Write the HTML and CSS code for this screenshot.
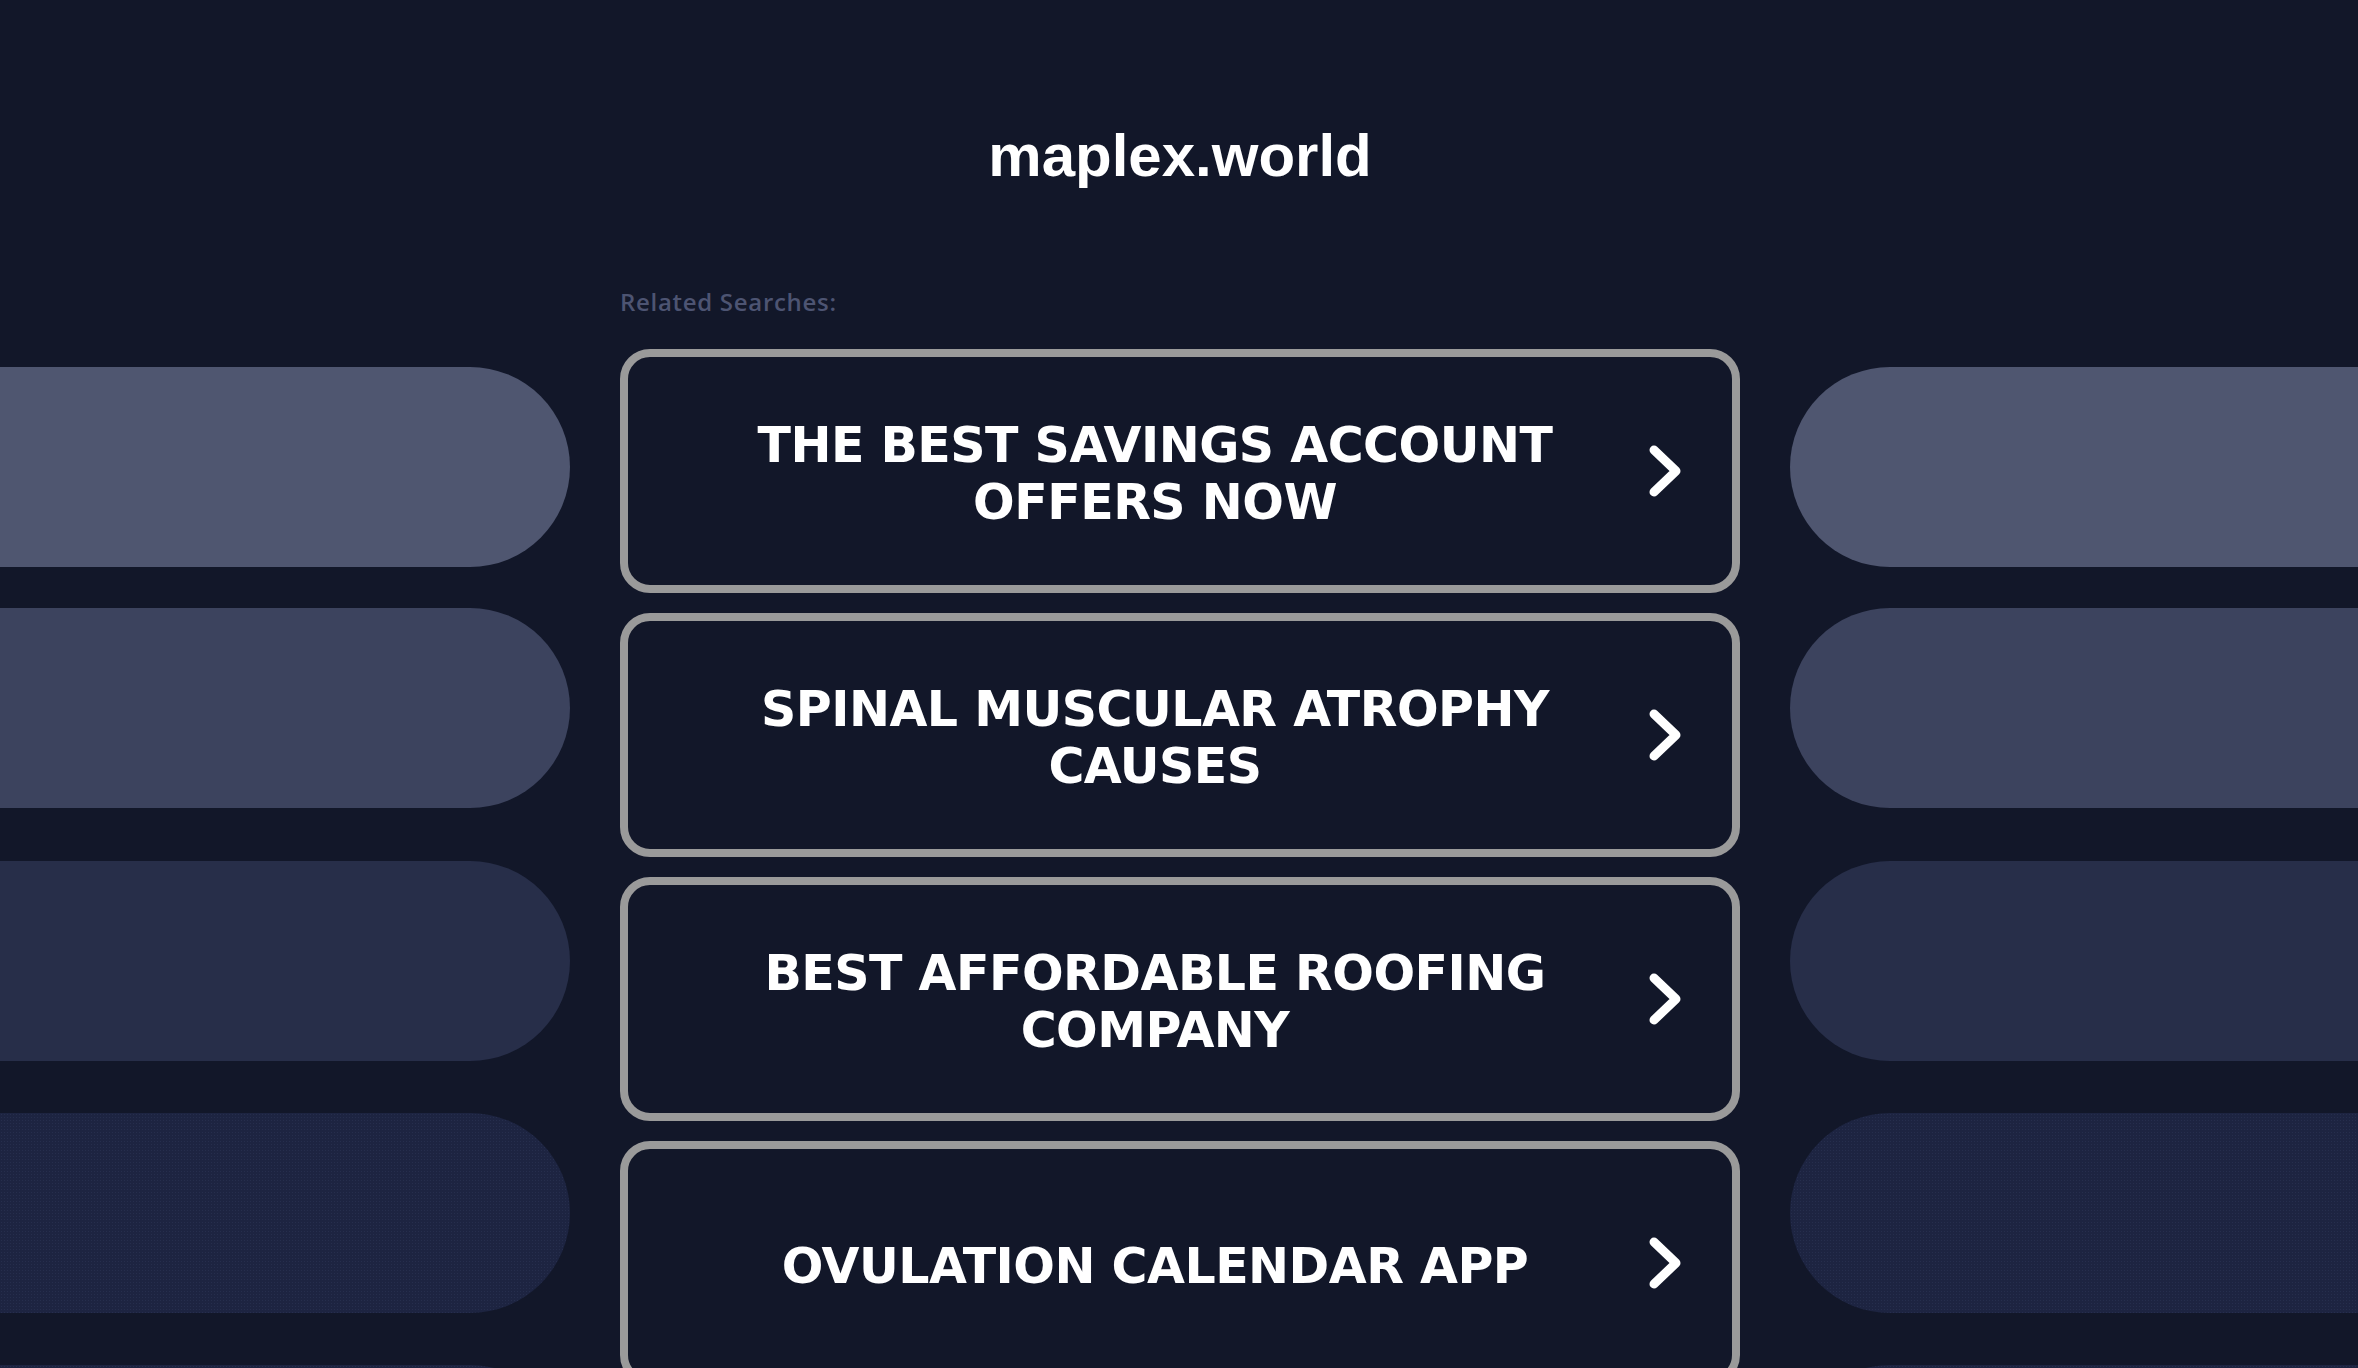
FILE: index.html
```html
<!DOCTYPE html>
<html lang="en">
<head>
<meta charset="utf-8">
<title>maplex.world</title>
<link rel="stylesheet" href="styles.css">
</head>
<body>
<div class="page">
  <aside class="rail rail-left" aria-hidden="true">
    <div class="pill tone-1"></div>
    <div class="pill tone-2"></div>
    <div class="pill tone-3"></div>
    <div class="pill tone-4"></div>
    <div class="pill tone-4"></div>
  </aside>

  <main class="center">
    <h1 class="domain">maplex.world</h1>
    <p class="label">Related Searches:</p>
    <div class="results">
      <a class="result" href="#">
        <span class="result-text">THE BEST SAVINGS ACCOUNT OFFERS NOW</span>
        <svg class="chevron" viewBox="0 0 34 52" width="34" height="52"><path d="M6 5 L28 26 L6 47"/></svg>
      </a>
      <a class="result" href="#">
        <span class="result-text">SPINAL MUSCULAR ATROPHY CAUSES</span>
        <svg class="chevron" viewBox="0 0 34 52" width="34" height="52"><path d="M6 5 L28 26 L6 47"/></svg>
      </a>
      <a class="result" href="#">
        <span class="result-text">BEST AFFORDABLE ROOFING COMPANY</span>
        <svg class="chevron" viewBox="0 0 34 52" width="34" height="52"><path d="M6 5 L28 26 L6 47"/></svg>
      </a>
      <a class="result" href="#">
        <span class="result-text">OVULATION CALENDAR APP</span>
        <svg class="chevron" viewBox="0 0 34 52" width="34" height="52"><path d="M6 5 L28 26 L6 47"/></svg>
      </a>
    </div>
  </main>

  <aside class="rail rail-right" aria-hidden="true">
    <div class="pill tone-1"></div>
    <div class="pill tone-2"></div>
    <div class="pill tone-3"></div>
    <div class="pill tone-4"></div>
    <div class="pill tone-4"></div>
  </aside>
</div>
</body>
</html>
```

FILE: styles.css
```css
html, body {
  margin: 0;
  padding: 0;
  height: 100%;
  overflow: hidden;
  background: #121729;
}

.page {
  display: grid;
  grid-template-columns: 570px 1120px 1fr;
  column-gap: 50px;
  min-height: 100%;
}

/* decorative side rails */
.rail {
  display: flex;
  flex-direction: column;
  padding-top: 367px;
}

.pill {
  height: 200px;
  flex: none;
}

.pill:nth-child(2) { margin-top: 41px; }
.pill:nth-child(3) { margin-top: 53px; }
.pill:nth-child(4) { margin-top: 52px; }
.pill:nth-child(5) { margin-top: 52px; }

.rail-left .pill { border-radius: 0 100px 100px 0; }
.rail-right .pill { border-radius: 100px 0 0 100px; }

.tone-1 { background: #4f5670; }
.tone-2 { background: #3c435e; }
.tone-3 { background: #272e49; }
.tone-4 {
  background-color: #1d2441;
  background-image: radial-gradient(rgba(120, 135, 190, 0.10) 0.8px, transparent 1px);
  background-size: 3px 3px;
}

/* main column */
.center {
  padding-top: 121px;
}

.domain {
  margin: 0;
  font-family: "Liberation Sans", Arial, sans-serif;
  font-weight: 700;
  font-size: 60px;
  line-height: 70px;
  color: #ffffff;
  text-align: center;
}

.label {
  margin: 99px 0 0;
  font-family: "Open Sans", "Liberation Sans", sans-serif;
  font-weight: 600;
  font-size: 24px;
  line-height: 24px;
  letter-spacing: 0.7px;
  color: #4d5472;
}

.results {
  display: flex;
  flex-direction: column;
  gap: 20px;
  margin-top: 35px;
}

.result {
  box-sizing: border-box;
  height: 244px;
  display: flex;
  align-items: center;
  padding: 0 50px 0 60px;
  border: 8px solid #9a9a9a;
  border-radius: 30px;
  text-decoration: none;
  background: #121729;
}

.result-text {
  flex: 1;
  padding-top: 6px;
  text-align: center;
  font-family: "DejaVu Sans", Verdana, sans-serif;
  font-weight: 700;
  font-size: 49px;
  line-height: 57px;
  letter-spacing: -0.5px;
  color: #ffffff;
}

.chevron {
  flex: none;
  margin-left: 26px;
  fill: none;
  stroke: #ffffff;
  stroke-width: 9;
  stroke-linecap: round;
  stroke-linejoin: round;
}
```
